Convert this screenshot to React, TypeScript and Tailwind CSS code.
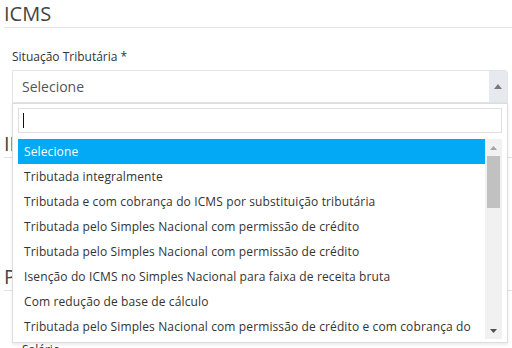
import React from "react";

const options = [
  "Selecione",
  "Tributada integralmente",
  "Tributada e com cobrança do ICMS por substituição tributária",
  "Tributada pelo Simples Nacional com permissão de crédito",
  "Tributada pelo Simples Nacional com permissão de crédito",
  "Isenção do ICMS no Simples Nacional para faixa de receita bruta",
  "Com redução de base de cálculo",
  "Tributada pelo Simples Nacional com permissão de crédito e com cobrança do",
];

function Heading({ children }: { children: React.ReactNode }) {
  return (
    <div className="ml-1 border-b border-[#e5e5e5]">
      <h2 className="h-[27px] text-[20px] leading-[27px] text-[#444]">{children}</h2>
    </div>
  );
}

export default function App() {
  return (
    <div
      className="relative h-[348px] w-[512px] overflow-hidden bg-white"
      style={{ fontFamily: '"Open Sans", "Noto Sans", sans-serif' }}
    >
      <Heading>ICMS</Heading>
      <div className="pl-3 pr-1">
        <div className="mt-5 h-[17px] text-[12px] leading-[17px] text-[#333]">Situação Tributária *</div>
        <div className="mt-[5px] flex h-[33px] rounded-tr-[3px] border border-[#e1e4e8] bg-white">
          <div className="flex flex-1 items-center pl-[9px] text-[14px] text-[#555]">Selecione</div>
          <div className="flex w-[18px] items-center justify-center bg-[#e6e9ed]">
            <svg width="8" height="5" viewBox="0 0 8 5">
              <path d="M0 5 L4 0 L8 5 Z" fill="#7a7a7a" />
            </svg>
          </div>
        </div>
      </div>
      <div className="mt-[27px]">
        <Heading>IPI</Heading>
      </div>
      <div className="h-[75px]" />
      <div className="mt-[30px]">
        <Heading>PIS</Heading>
      </div>
      <div className="ml-[22px] mt-[50px] text-[12px] leading-[17px] text-[#333]">Salário</div>

      {/* open dropdown */}
      <div className="absolute left-[12px] top-[103px] w-[496px] border border-[#dcdcdc] bg-white px-[5px] pb-[3px] pt-[4px] shadow-[0_2px_3px_rgba(0,0,0,0.08)]">
        <div className="flex h-[25px] items-center border border-[#e0e0e0] px-[4px]">
          <div className="h-[15px] w-px bg-[#111]" />
        </div>
        <div className="mt-[6px] flex h-[200px]">
          <div className="flex-1">
            {options.map((o, i) => (
              <div
                key={i}
                className={
                  "flex h-[25px] items-center overflow-hidden whitespace-nowrap pl-[6px] text-[12px] tracking-[0.12px] " +
                  (i === 0 ? "bg-[#03a9f4] text-white" : "text-[#333]")
                }
              >
                {o}
              </div>
            ))}
          </div>
          <div className="flex w-[17px] flex-col items-center bg-[#f1f1f1]">
            <div className="flex h-[17px] w-full items-center justify-center">
              <svg width="7" height="4" viewBox="0 0 7 4">
                <path d="M0 4 L3.5 0 L7 4 Z" fill="#a3a3a3" />
              </svg>
            </div>
            <div className="h-[52px] w-[13px] bg-[#c1c1c1]" />
            <div className="flex-1" />
            <div className="flex h-[17px] w-full items-center justify-center">
              <svg width="7" height="4" viewBox="0 0 7 4">
                <path d="M0 0 L3.5 4 L7 0 Z" fill="#505050" />
              </svg>
            </div>
          </div>
        </div>
      </div>
    </div>
  );
}
